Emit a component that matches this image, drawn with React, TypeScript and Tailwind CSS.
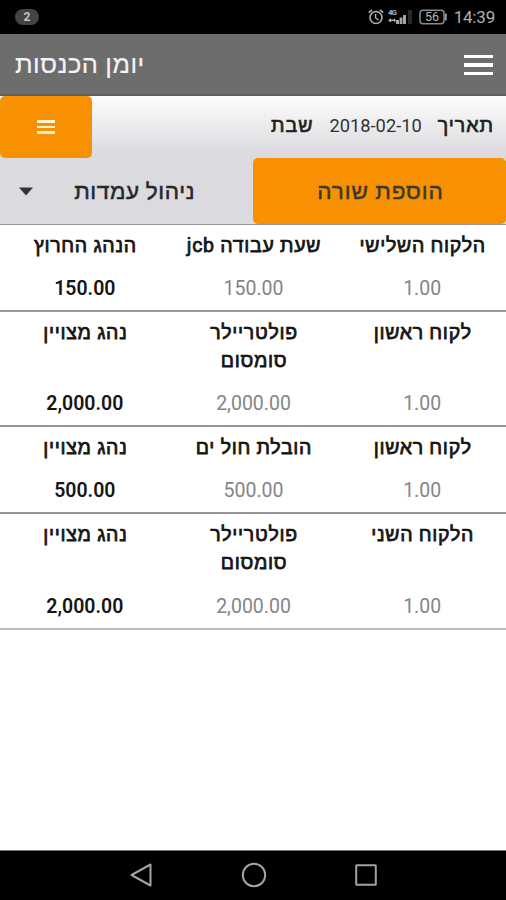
type Row = { h: string; client: string; job: string[]; driver: string; total: string; border: string };

const rows: Row[] = [
  { h: "h-[87px]", client: "הלקוח השלישי", job: ["שעת עבודה jcb"], driver: "הנהג החרוץ", total: "150.00", border: "border-b-2 border-[#999b99]" },
  { h: "h-[115px]", client: "לקוח ראשון", job: ["פולטריילר", "סומסום"], driver: "נהג מצויין", total: "2,000.00", border: "border-b-2 border-[#969696]" },
  { h: "h-[87px]", client: "לקוח ראשון", job: ["הובלת חול ים"], driver: "נהג מצויין", total: "500.00", border: "border-b-2 border-[#969696]" },
  { h: "h-[116px]", client: "הלקוח השני", job: ["פולטריילר", "סומסום"], driver: "נהג מצויין", total: "2,000.00", border: "border-b-2 border-[#bdbdbd]" },
];

function Cell({ lines, value, strong }: { lines: string[]; value: string; strong?: boolean }) {
  return (
    <div className="flex flex-1 flex-col items-center justify-between pt-[7px] pb-[6px]">
      <div className="pl-[2px] text-center text-[19.5px] leading-[28px] tracking-[0.7px] text-[#151515] [-webkit-text-stroke:0.75px_#151515]">
        {lines.map((l) => (
          <div key={l}>{l}</div>
        ))}
      </div>
      <div className={strong ? "pl-px text-[19.5px] leading-[30px] font-semibold text-[#151515]" : "pl-px text-[19.5px] leading-[30px] text-[#858585]"}>
        {value}
      </div>
    </div>
  );
}

function StatusBar() {
  return (
    <div dir="ltr" className="flex h-[34px] items-center justify-between bg-black pr-[11px] pl-[15px] text-[#b0b0b0]">
      <div className="flex h-[16px] w-[24px] items-center justify-center rounded-full bg-[#444444] text-[12px] leading-none font-bold text-[#c4c4c4]">2</div>
      <div className="flex items-center">
        <svg width="16" height="18" viewBox="0 0 16 18" fill="none" stroke="#b0b0b0" strokeWidth="1.6" className="mr-[4px]">
          <circle cx="8" cy="9.5" r="6" />
          <path d="M7.6 6v4l3 2" strokeWidth="1.4" />
          <path d="M.8 4.6 4 1.8M15.2 4.6 12 1.8" />
        </svg>
        <svg width="26" height="18" viewBox="0 0 26 18" className="mr-[5px]">
          <text x="0" y="6.5" fontSize="8" fontWeight="700" fill="#b0b0b0" fontFamily="Roboto, sans-serif" textLength="9">4G</text>
          <path d="M0 12.5 3 10v1.5h3V10l2 2.5-2 2V13H3v1.5z" fill="#b0b0b0" />
          <path d="M8 12h3v4H8zM11.6 9.5h2.8V16h-2.8zM15 7h3v9h-3z" fill="#a4a4a4" />
          <path d="M20 2h4v14h-4z" fill="#292929" />
        </svg>
        <svg width="29" height="18" viewBox="0 0 29 18" className="mr-[6px]">
          <rect x="1" y="2.2" width="24" height="13.6" rx="3" fill="none" stroke="#8a8a8a" strokeWidth="1.5" />
          <path d="M26.8 5.5v7" stroke="#a0a0a0" strokeWidth="1.8" />
          <text x="13" y="13.2" textAnchor="middle" fontSize="12.5" fill="#b8b8b8" fontFamily="Roboto, sans-serif">56</text>
        </svg>
        <span className="pt-[1px] text-[17px] leading-none tracking-[-0.2px]">14:39</span>
      </div>
    </div>
  );
}

export default function App() {
  return (
    <div dir="rtl" className="flex h-[900px] w-[506px] flex-col overflow-hidden bg-white font-['Roboto','Liberation_Sans',sans-serif]">
      <StatusBar />
      <header className="flex h-[62px] items-center justify-between border-b-2 border-[#606060] bg-[#6d6d6d] pr-[13px] pl-[15px]">
        <div className="flex w-[29px] flex-col gap-[5px] pt-[2px]">
          <div className="h-[3.5px] bg-white" />
          <div className="h-[3.5px] bg-white" />
          <div className="h-[3.5px] bg-white" />
        </div>
        <h1 className="pt-[2px] text-[25.5px] leading-none tracking-[0.5px] text-[#f4f4f4] [-webkit-text-stroke:0.2px_#f4f4f4]">יומן הכנסות</h1>
      </header>

      <div className="bg-[#dadadf]">
        <div className="flex h-[62px] items-center justify-between bg-linear-to-b from-[#fdfdfd] to-[#d9d9de]">
          <div className="flex items-center gap-[16px] pr-[12px] pb-[3px] text-[19.5px] text-[#222]">
            <span className="tracking-[1px] [-webkit-text-stroke:0.7px_#222]">תאריך</span>
            <span className="text-[18.3px] text-[#333]">2018-02-10</span>
            <span className="tracking-[1px] [-webkit-text-stroke:0.7px_#222]">שבת</span>
          </div>
          <button className="flex h-[62px] w-[92px] flex-col items-center justify-center gap-[3px] rounded-[5px] bg-[#f79102]">
            <span className="h-[2.5px] w-[18px] bg-[#fff0d2]" />
            <span className="h-[2.5px] w-[18px] bg-[#fff0d2]" />
            <span className="h-[2.5px] w-[18px] bg-[#fff0d2]" />
          </button>
        </div>
        <div className="flex h-[66px]">
          <button className="w-[253px] rounded-[5px] bg-[#f79102] pt-[1px] pl-[2px] text-[22.5px] tracking-[0.9px] text-[#3d3928] [-webkit-text-stroke:0.5px_#3d3928]">הוספת שורה</button>
          <div className="flex flex-1 items-center justify-between pr-[58px] pl-[19px]">
            <span className="pt-[1px] text-[22.5px] tracking-[0.6px] text-[#26262b] [-webkit-text-stroke:0.5px_#26262b]">ניהול עמדות</span>
            <svg width="14" height="9" viewBox="0 0 14 9">
              <path d="M0 .5h14L7 8.5z" fill="#333338" />
            </svg>
          </div>
        </div>
      </div>

      <main className="flex-1 border-t border-[#999]">
        {rows.map((r, i) => (
          <div key={i} className={`flex ${r.h} ${r.border}`}>
            <Cell lines={[r.client]} value="1.00" />
            <Cell lines={r.job} value={r.job.length > 1 ? "2,000.00" : r.total} />
            <Cell lines={[r.driver]} value={r.total} strong />
          </div>
        ))}
      </main>

      <nav dir="ltr" className="flex h-[50px] items-center justify-between border-t border-[#777] bg-black pr-[129px] pb-[1px] pl-[130px]">
        <svg width="22" height="24" viewBox="0 0 22 24" fill="none" stroke="#a3a3a3" strokeWidth="2" strokeLinejoin="round">
          <path d="M20.5 1.5v21L1.5 12z" />
        </svg>
        <svg width="26" height="26" viewBox="0 0 26 26" fill="none" stroke="#a3a3a3" strokeWidth="2">
          <circle cx="13" cy="13" r="11.2" />
        </svg>
        <svg width="22" height="22" viewBox="0 0 22 22" fill="none" stroke="#a3a3a3" strokeWidth="2">
          <rect x="1.2" y="1.2" width="19.6" height="19.6" rx="0.5" />
        </svg>
      </nav>
    </div>
  );
}
